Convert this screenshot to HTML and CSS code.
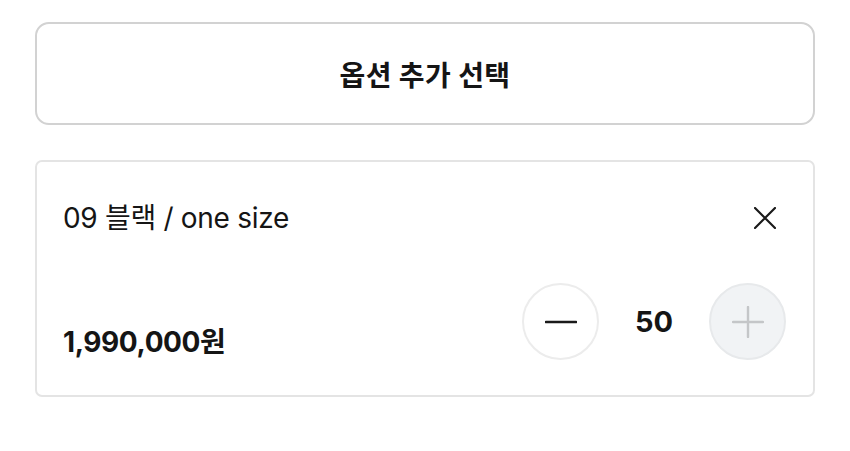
FILE: index.html
```html
<!DOCTYPE html>
<html lang="ko">
<head>
    <meta charset="UTF-8">
    <meta name="viewport" content="width=device-width, initial-scale=1.0">
    <title>옵션 선택</title>
    <link rel="stylesheet" href="styles.css">
</head>
<body>
    <div class="sheet">
        <!-- 옵션 추가 버튼 -->
        <button class="add-btn">옵션 추가 선택</button>

        <!-- 선택된 옵션 -->
        <div class="option-card">
            <div class="option-top">
                <span class="option-name">09 블랙 / one size</span>
                <button class="close-btn" aria-label="삭제">
                    <svg width="22" height="22" viewBox="0 0 22 22">
                        <path d="M1 1L21 21M21 1L1 21" stroke="#1a1a1a" stroke-width="2.2" stroke-linecap="round"/>
                    </svg>
                </button>
            </div>
            <div class="option-bottom">
                <span class="price">1,990,000원</span>
                <div class="stepper">
                    <button class="step minus" aria-label="감소">
                        <svg width="32" height="4" viewBox="0 0 32 4">
                            <path d="M1 2H31" stroke="#1a1a1a" stroke-width="2.6" stroke-linecap="round"/>
                        </svg>
                    </button>
                    <span class="qty">50</span>
                    <button class="step plus" aria-label="증가">
                        <svg width="32" height="32" viewBox="0 0 32 32">
                            <path d="M1 16H31M16 1V31" stroke="#c4c6c8" stroke-width="2.4" stroke-linecap="round"/>
                        </svg>
                    </button>
                </div>
            </div>
        </div>
    </div>
</body>
</html>
```

FILE: styles.css
```css
body {
    margin: 0;
    background: #ffffff;
    font-family: 'Inter', 'Noto Sans CJK KR', sans-serif;
    color: #151515;
}
.sheet {
    padding: 22px 35px;
}
button {
    font-family: inherit;
    background: none;
    border: none;
    padding: 0;
    cursor: pointer;
}
/* 옵션 추가 버튼 */
.add-btn {
    display: block;
    width: 100%;
    height: 103px;
    border: 2px solid #d2d2d2;
    border-radius: 14px;
    background: #fff;
    font-size: 28px;
    font-weight: 700;
    color: #151515;
    letter-spacing: 0.4px;
}
/* 옵션 카드 */
.option-card {
    margin-top: 35px;
    border: 2px solid #e4e4e4;
    border-radius: 7px;
    padding: 36px 27px 35px 26px;
}
.option-top {
    display: flex;
    align-items: center;
    justify-content: space-between;
    height: 40px;
}
.option-name {
    font-size: 28px;
    line-height: 40px;
    letter-spacing: -0.3px;
}
.close-btn {
    width: 28px;
    height: 28px;
    margin-right: 7px;
    display: flex;
    align-items: center;
    justify-content: center;
}
.option-bottom {
    margin-top: 45px;
    display: flex;
    align-items: flex-end;
    justify-content: space-between;
}
.price {
    font-size: 28px;
    font-weight: 700;
    line-height: 36px;
    letter-spacing: -0.4px;
}
.stepper {
    display: flex;
    align-items: center;
}
.step {
    width: 77px;
    height: 77px;
    border-radius: 50%;
    border: 2px solid #ececec;
    background: #fff;
    display: flex;
    align-items: center;
    justify-content: center;
    box-sizing: border-box;
}
.step.plus {
    background: #f1f3f5;
    border-color: #e7e9eb;
}
.qty {
    width: 110px;
    text-align: center;
    font-size: 29px;
    font-weight: 700;
}
```
